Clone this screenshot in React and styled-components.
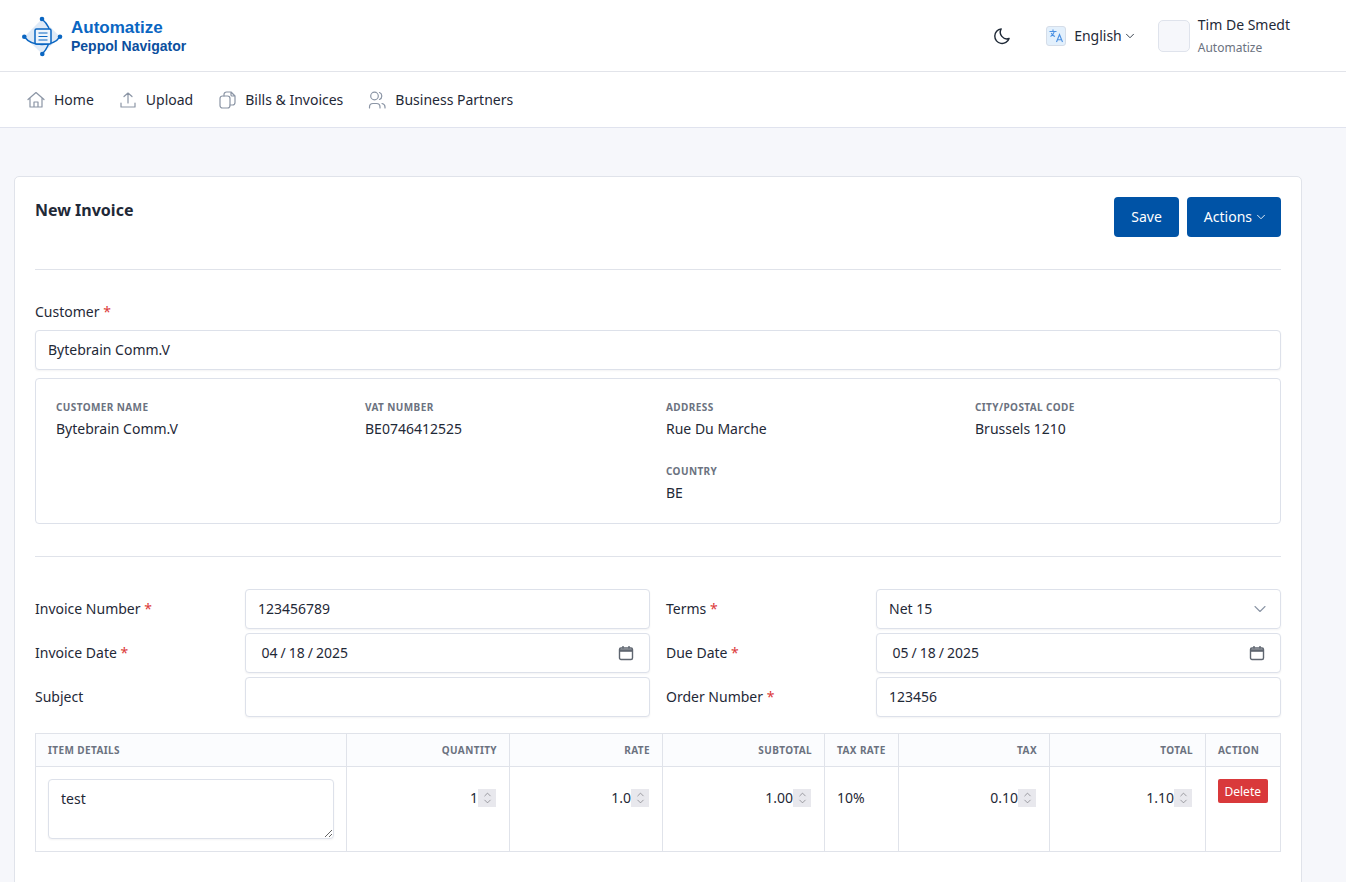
import styled, { createGlobalStyle } from 'styled-components';
import { ChevronDown, ChevronUp } from 'lucide-react';

const Global = createGlobalStyle`
  html, body {
    margin: 0;
    height: 882px;
    overflow: hidden;
    background: #f6f7fb;
    font-family: "Noto Sans", sans-serif;
    color: #1f2937;
  }
  * { box-sizing: border-box; }
`

const Header = styled.header`
  height: 72px;
  background: #fff;
  border-bottom: 1px solid #e2e4ea;
  display: flex;
  align-items: center;
  justify-content: space-between;
  padding: 0 56px 0 22px;
`

const Brand = styled.div`
  display: flex;
  align-items: center;
  gap: 7px;
`

const BrandText = styled.div`
  font-family: "Liberation Sans", Arial, sans-serif;
  font-weight: 700;
  margin-top: 1px;
`

const BrandTop = styled.div`
  font-size: 17px;
  line-height: 21px;
  color: #0a66c2;
`

const BrandSub = styled.div`
  font-size: 14px;
  line-height: 17px;
  color: #0b4f9e;
`

const HeaderRight = styled.div`
  display: flex;
  align-items: center;
`

const Moon = styled.svg`
  width: 20px;
  height: 20px;
  margin-right: 34px;
  fill: none;
  stroke: #1f2937;
  stroke-width: 1.7;
`

const LangBadge = styled.div`
  width: 20px;
  height: 20px;
  border-radius: 3px;
  background: #e3f0fc;
  border: 1px solid #d5dde8;
  display: flex;
  align-items: center;
  justify-content: center;
  margin-right: 8px;
`

const Lang = styled.div`
  font-size: 14px;
  display: flex;
  align-items: center;
  gap: 1px;
  margin-right: 21px;
  color: #1f2937;
`

const Avatar = styled.div`
  width: 32px;
  height: 32px;
  border-radius: 5px;
  background: #f6f7fb;
  border: 1px solid #dfe3ec;
  margin-right: 8px;
`

const UserName = styled.div`
  font-size: 14px;
  line-height: 19px;
  color: #1f2937;
`

const UserOrg = styled.div`
  font-size: 12px;
  line-height: 16px;
  margin-top: 6px;
  color: #6b7280;
`

const Nav = styled.nav`
  height: 56px;
  background: #fff;
  border-bottom: 1px solid #e0e3ee;
  display: flex;
  align-items: center;
  padding-left: 26px;
  gap: 24px;
`

const NavItem = styled.a`
  display: flex;
  align-items: center;
  gap: 8px;
  font-size: 14px;
  color: #1f2937;
  svg {
    width: 20px;
    height: 20px;
    fill: none;
    stroke: #8b95a5;
    stroke-width: 1.2;
    stroke-linecap: round;
    stroke-linejoin: round;
  }
`

const Card = styled.main`
  width: 1288px;
  margin: 48px 0 0 14px;
  background: #fff;
  border: 1px solid #e0e3ea;
  border-radius: 5px;
  padding: 20px 20px 60px;
`

const TitleRow = styled.div`
  display: flex;
  justify-content: space-between;
  align-items: flex-start;
  padding-bottom: 32px;
  border-bottom: 1px solid #e0e3ea;
`

const Title = styled.h1`
  margin: 0;
  font-size: 16px;
  line-height: 26px;
  font-weight: 700;
  color: #1f2937;
`

const Buttons = styled.div`
  display: flex;
  gap: 8px;
`

const Button = styled.button`
  height: 40px;
  padding: 0 17px 2px;
  background: #0053a6;
  border: 0;
  border-radius: 4px;
  color: #fff;
  font: 14px "Noto Sans", sans-serif;
  display: flex;
  align-items: center;
  gap: 2px;
  svg { margin: 2px -4px 0 0; }
`

const Label = styled.label`
  display: block;
  font-size: 14px;
  line-height: 20px;
  color: #1f2937;
`

const Req = styled.span`
  color: #dc3a3a;
`

const CustomerLabel = styled(Label)`
  margin: 32px 0 8px;
`

const Field = styled.input`
  display: block;
  width: 100%;
  height: 40px;
  padding: 0 12px 2px;
  background: #fff;
  border: 1px solid #dde1ea;
  border-radius: 4px;
  box-shadow: 0 1px 2px rgba(16, 24, 40, 0.05);
  font: 14px "Noto Sans", sans-serif;
  color: #1f2937;
  outline: none;
`

const DateWrap = styled.div`
  position: relative;
`

const DateField = styled(Field)`
  padding: 0 15px 2px 14.5px;
  &::-webkit-datetime-edit-text { padding: 0 2px; }
  &::-webkit-calendar-picker-indicator { opacity: 0; }
`

const CalendarIcon = styled.svg`
  position: absolute;
  top: 12px;
  right: 16px;
  width: 16px;
  height: 16px;
  fill: none;
  stroke: #5f6670;
  stroke-width: 1.4;
  pointer-events: none;
`

const SelectBox = styled.div`
  height: 40px;
  padding: 0 12px 2px;
  border: 1px solid #dde1ea;
  border-radius: 4px;
  box-shadow: 0 1px 2px rgba(16, 24, 40, 0.05);
  font-size: 14px;
  display: flex;
  align-items: center;
  justify-content: space-between;
  svg { margin: 2px -2px 0 0; }
`

const Details = styled.section`
  margin-top: 8px;
  height: 146px;
  border: 1px solid #dde1ea;
  border-radius: 4px;
  padding: 20px;
  display: grid;
  grid-template-columns: 309px 301px 309px 1fr;
  grid-auto-rows: 44px;
  row-gap: 20px;
`

const DetailLabel = styled.div`
  font-size: 10px;
  line-height: 16px;
  font-weight: 700;
  letter-spacing: 0.4px;
  color: #6b7280;
  text-transform: uppercase;
`

const DetailValue = styled.div`
  font-size: 14px;
  line-height: 20px;
  margin-top: 4px;
`

const Divider = styled.hr`
  margin: 32px 0;
  border: 0;
  border-top: 1px solid #e0e3ea;
`

const FormGrid = styled.div`
  display: grid;
  grid-template-columns: 1fr 1fr;
  column-gap: 16px;
  row-gap: 4px;
`

const FormRow = styled.div`
  display: grid;
  grid-template-columns: 210px 1fr;
  align-items: center;
`

const Table = styled.table`
  width: 1245px;
  margin-top: 16px;
  border-collapse: collapse;
  table-layout: fixed;
`

const Th = styled.th`
  height: 33px;
  padding: 0 12px;
  background: #fbfcfe;
  border: 1px solid #e0e3ea;
  font-size: 10px;
  font-weight: 700;
  letter-spacing: 0.4px;
  color: #6b7280;
  text-transform: uppercase;
  text-align: ${p => p.$right ? 'right' : 'left'};
`

const Td = styled.td`
  height: 85px;
  padding: 12px;
  border: 1px solid #e0e3ea;
  vertical-align: top;
  font-size: 14px;
`

const TextArea = styled.textarea`
  display: block;
  width: 100%;
  height: 60px;
  padding: 9px 12px;
  border: 1px solid #dde1ea;
  border-radius: 4px;
  box-shadow: 0 1px 2px rgba(16, 24, 40, 0.05);
  font: 14px "Noto Sans", sans-serif;
  color: #1f2937;
  outline: none;
`

const NumWrap = styled.div`
  display: flex;
  align-items: center;
  height: 18px;
  margin: 10px 1px 0 0;
`

const NumInput = styled.input`
  flex: 1;
  min-width: 0;
  height: 18px;
  padding: 0 0 1px;
  border: 0;
  text-align: right;
  font: 14px "Noto Sans", sans-serif;
  color: #1f2937;
  outline: none;
  appearance: textfield;
  &::-webkit-inner-spin-button { appearance: none; }
`

const Spin = styled.div`
  width: 18px;
  height: 18px;
  background: #e8e8ed;
  display: flex;
  flex-direction: column;
  align-items: center;
  justify-content: center;
  color: #77777e;
  svg { margin: -2px 0; }
`

const Percent = styled.div`
  margin-top: 9px;
  line-height: 20px;
`

const DeleteButton = styled.button`
  height: 24px;
  padding: 0 6.5px;
  background: #d9393b;
  border: 0;
  border-radius: 2px;
  color: #fff;
  font: 12px "Noto Sans", sans-serif;
`

const columns = [
  { name: 'Item Details', width: 311 },
  { name: 'Quantity', width: 163, right: true },
  { name: 'Rate', width: 153, right: true },
  { name: 'Subtotal', width: 162, right: true },
  { name: 'Tax Rate', width: 74 },
  { name: 'Tax', width: 151, right: true },
  { name: 'Total', width: 156, right: true },
  { name: 'Action', width: 75 },
]

const customer = [
  ['Customer Name', 'Bytebrain Comm.V'],
  ['VAT Number', 'BE0746412525'],
  ['Address', 'Rue Du Marche'],
  ['City/Postal Code', 'Brussels 1210'],
]

function Logo() {
  return (
    <svg width="42" height="42" viewBox="0 0 42 42" fill="none">
      <path d="M20 4 L38 21.700 L20.300 39 L2.300 21.700 Z" fill="#dfeaf7" />
      <path d="M20 4C27 10 28.500 17 28 22C27.500 29 25 34 20.300 39" stroke="#0a66c2" strokeWidth="1.500" />
      <path d="M2.300 21.700C7 28 13 29.500 20 29.500C28 29.500 34 28 38 21.700" stroke="#0a66c2" strokeWidth="1.500" />
      <rect x="13" y="14" width="16" height="15" rx="1.500" fill="#eef4fc" stroke="#0a66c2" strokeWidth="1.500" />
      <path d="M16.500 18h9M16.500 21.500h9M16.500 25h9" stroke="#0a66c2" strokeWidth="1.200" />
      <circle cx="20" cy="4" r="2.300" fill="#0a66c2" />
      <circle cx="2.300" cy="21.700" r="2.300" fill="#0a66c2" />
      <circle cx="38" cy="21.700" r="2.300" fill="#0a66c2" />
      <circle cx="20.300" cy="39" r="2.300" fill="#0a66c2" />
    </svg>
  );
}

function DateInput({ value }) {
  return (
    <DateWrap>
      <DateField type="date" defaultValue={value} />
      <CalendarIcon viewBox="0 0 16 16">
        <rect x="1.500" y="3" width="13" height="11.500" rx="1.500" />
        <path d="M1.500 5.500h13" strokeWidth="2.600" />
        <path d="M5 1v2.500M11 1v2.500" />
      </CalendarIcon>
    </DateWrap>
  );
}

function NumberCell({ value }) {
  return (
    <Td>
      <NumWrap>
        <NumInput type="number" defaultValue={value} />
        <Spin>
          <ChevronUp size={11} strokeWidth={1.500} />
          <ChevronDown size={11} strokeWidth={1.500} />
        </Spin>
      </NumWrap>
    </Td>
  );
}

function App() {
  return (
    <>
      <Global />
      <Header>
        <Brand>
          <Logo />
          <BrandText>
            <BrandTop>Automatize</BrandTop>
            <BrandSub>Peppol Navigator</BrandSub>
          </BrandText>
        </Brand>
        <HeaderRight>
          <Moon viewBox="0 0 24 24"><path d="M11 3.500a8.800 8.800 0 1 0 9.500 11.500A8 8 0 0 1 11 3.500Z" strokeLinejoin="round" /></Moon>
          <LangBadge>
            <svg width="17" height="17" viewBox="0 0 17 17" fill="none" stroke="#4a90e2" strokeWidth="1.100">
              <path d="M1.500 4.500h7M5 2.500v2M2.500 9.500c2-1 3.300-2.500 3.800-5M3.300 6c.7 1.600 2 2.800 3.700 3.500M8.500 15l3-7.500 3 7.500M9.500 12.800h4" />
            </svg>
          </LangBadge>
          <Lang>English <ChevronDown size={14} strokeWidth={1.500} /></Lang>
          <Avatar />
          <div>
            <UserName>Tim De Smedt</UserName>
            <UserOrg>Automatize</UserOrg>
          </div>
        </HeaderRight>
      </Header>

      <Nav>
        <NavItem>
          <svg viewBox="0 0 20 20"><path d="M2 9.500 10 2.500l8 7M4 8v9h12V8M8 17v-5h4v5" /></svg>
          Home
        </NavItem>
        <NavItem>
          <svg viewBox="0 0 20 20"><path d="M10 13V3M6 6.500 10 3l4 3.500M3 13v4h14v-4" /></svg>
          Upload
        </NavItem>
        <NavItem>
          <svg viewBox="0 0 20 20">
            <rect x="3" y="6" width="10" height="12" rx="2.500" />
            <path d="M7 6V4.500A2.500 2.500 0 0 1 9.500 2H14l4 4v6.500a2.500 2.500 0 0 1-2.500 2.500H13M14 2v3a1 1 0 0 0 1 1h3" />
          </svg>
          Bills &amp; Invoices
        </NavItem>
        <NavItem>
          <svg viewBox="0 0 20 20">
            <circle cx="7.500" cy="6" r="3.800" />
            <path d="M2.500 18v-1a3.500 3.500 0 0 1 3.500-3.500h3.500A3.500 3.500 0 0 1 13 17v1M12.500 2.500c1.500.6 2.300 2 2.300 3.500s-.8 2.900-2.300 3.500M15 13.500c1.800.4 3 1.800 3 3.500v1" />
          </svg>
          Business Partners
        </NavItem>
      </Nav>

      <Card>
        <TitleRow>
          <Title>New Invoice</Title>
          <Buttons>
            <Button>Save</Button>
            <Button>Actions <ChevronDown size={14} strokeWidth={1.500} /></Button>
          </Buttons>
        </TitleRow>

        <CustomerLabel>Customer <Req>*</Req></CustomerLabel>
        <Field defaultValue="Bytebrain Comm.V" />

        <Details>
          {customer.map(([label, value]) => (
            <div key={label}>
              <DetailLabel>{label}</DetailLabel>
              <DetailValue>{value}</DetailValue>
            </div>
          ))}
          <div />
          <div />
          <div>
            <DetailLabel>Country</DetailLabel>
            <DetailValue>BE</DetailValue>
          </div>
        </Details>

        <Divider />

        <FormGrid>
          <FormRow>
            <Label>Invoice Number <Req>*</Req></Label>
            <Field defaultValue="123456789" />
          </FormRow>
          <FormRow>
            <Label>Terms <Req>*</Req></Label>
            <SelectBox>Net 15 <ChevronDown size={20} color="#8b95a5" strokeWidth={1.300} /></SelectBox>
          </FormRow>
          <FormRow>
            <Label>Invoice Date <Req>*</Req></Label>
            <DateInput value="2025-04-18" />
          </FormRow>
          <FormRow>
            <Label>Due Date <Req>*</Req></Label>
            <DateInput value="2025-05-18" />
          </FormRow>
          <FormRow>
            <Label>Subject</Label>
            <Field />
          </FormRow>
          <FormRow>
            <Label>Order Number <Req>*</Req></Label>
            <Field defaultValue="123456" />
          </FormRow>
        </FormGrid>

        <Table>
          <colgroup>
            {columns.map(c => <col key={c.name} width={c.width} />)}
          </colgroup>
          <thead>
            <tr>
              {columns.map(c => <Th key={c.name} $right={c.right}>{c.name}</Th>)}
            </tr>
          </thead>
          <tbody>
            <tr>
              <Td><TextArea defaultValue="test" /></Td>
              <NumberCell value="1" />
              <NumberCell value="1.0" />
              <NumberCell value="1.00" />
              <Td><Percent>10%</Percent></Td>
              <NumberCell value="0.10" />
              <NumberCell value="1.10" />
              <Td><DeleteButton>Delete</DeleteButton></Td>
            </tr>
          </tbody>
        </Table>
      </Card>
    </>
  );
}

export default App;
